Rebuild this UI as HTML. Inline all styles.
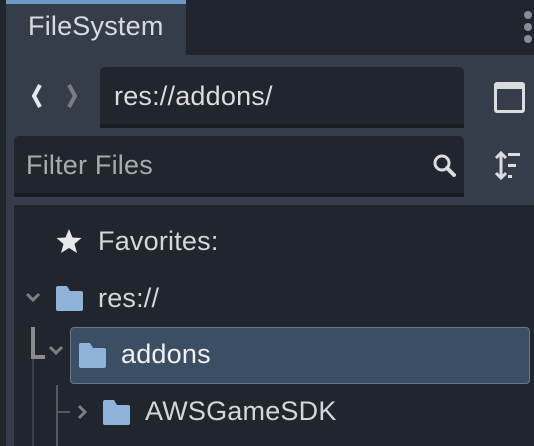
<!DOCTYPE html>
<html><head><style>
*{margin:0;padding:0;box-sizing:border-box}
body{width:534px;height:446px;background:#21252d;position:relative;overflow:hidden;font-family:"Liberation Sans","DejaVu Sans",sans-serif;color:#dcdcdc}
.a{position:absolute}
.t{font-size:27px;white-space:nowrap;letter-spacing:0.2px}
</style></head><body>
<div class="a" style="left:6px;top:0;width:528px;height:446px;background:#363d4a"></div>
<div class="a" style="left:186px;top:0;width:348px;height:55px;background:#21262e"></div>
<div class="a" style="left:6px;top:0;width:180px;height:4px;background:#6b97c6"></div>
<div class="a t" style="left:28px;top:11px;color:#d8dade">FileSystem</div>
<div class="a" style="left:524px;top:11px;width:8px;height:8px;border-radius:4px;background:#8a8d93"></div>
<div class="a" style="left:524px;top:23px;width:8px;height:8px;border-radius:4px;background:#8a8d93"></div>
<div class="a" style="left:524px;top:35px;width:8px;height:8px;border-radius:4px;background:#8a8d93"></div>
<svg class="a" style="left:24px;top:82px" width="60" height="30"><path d="M16 3 L10 14 L16 25" stroke="#e8e8e8" stroke-width="4" fill="none"/><path d="M45 3 L51 14 L45 25" stroke="#7a7d82" stroke-width="4" fill="none"/></svg>
<div class="a" style="left:100px;top:67px;width:364px;height:61px;background:#21252e;border-radius:5px 5px 0 0;border-bottom:4px solid #1a1d23"></div>
<div class="a t" style="left:114px;top:81px;color:#dadbdd">res://addons/</div>
<div class="a" style="left:494px;top:82px;width:31px;height:31px;border:3px solid #dcdcdc;border-top-width:7px;border-radius:3px"></div>
<div class="a" style="left:14px;top:136px;width:450px;height:61px;background:#21252e;border-radius:5px 5px 0 0;border-bottom:4px solid #1a1d23"></div>
<div class="a t" style="left:26px;top:150px;color:#a8aaae">Filter Files</div>
<svg class="a" style="left:420px;top:150px" width="40" height="32"><circle cx="22" cy="13" r="7" stroke="#dcdcdc" stroke-width="3" fill="none"/><path d="M27 18 L34 25" stroke="#dcdcdc" stroke-width="4" stroke-linecap="round"/></svg>
<svg class="a" style="left:492px;top:150px" width="34" height="32"><path d="M9 3 V28 M4 8 L9 3 L14 8 M4 23 L9 28 L14 23" stroke="#dcdcdc" stroke-width="3" fill="none"/><rect x="16" y="3" width="12" height="3" fill="#dcdcdc"/><rect x="16" y="14" width="8" height="3" fill="#dcdcdc"/><rect x="16" y="25" width="4" height="3" fill="#dcdcdc"/></svg>
<div class="a" style="left:14px;top:205px;width:520px;height:241px;background:#21252d"></div>
<svg class="a" style="left:54px;top:227px" width="30" height="30"><path d="M15 2 L18.5 10.5 L27.5 11 L20.5 17 L23 26 L15 21 L7 26 L9.5 17 L2.5 11 L11.5 10.5 Z" fill="#e8e8e8"/></svg>
<div class="a t" style="left:98px;top:226px;color:#d4d6da">Favorites:</div>
<svg class="a" style="left:24px;top:289px" width="20" height="16"><path d="M3 5 L9 11 L15 5" stroke="#7c7f84" stroke-width="3" fill="none"/></svg>
<svg class="a" style="left:55px;top:286px" width="30" height="26"><path d="M1 2 Q1 0 3 0 H12 L15 5 H26 Q28 5 28 7 V23 Q28 25 26 25 H3 Q1 25 1 23 Z" fill="#8fb3d9"/></svg>
<div class="a t" style="left:98px;top:283px;color:#d4d6da">res://</div>
<svg class="a" style="left:28px;top:325px" width="50" height="121"><path d="M5 2 V32 H17" stroke="#8a8b8d" stroke-width="4" fill="none"/><path d="M5 34 V121" stroke="#3b3f47" stroke-width="2" fill="none"/><path d="M22 22 L28 28 L34 22" stroke="#7c7f84" stroke-width="3" fill="none"/></svg>
<div class="a" style="left:70px;top:327px;width:460px;height:57px;background:#3c4e64;border:1px solid #6b7686;border-radius:4px"></div>
<svg class="a" style="left:78px;top:343px" width="30" height="26"><path d="M1 2 Q1 0 3 0 H12 L15 5 H26 Q28 5 28 7 V23 Q28 25 26 25 H3 Q1 25 1 23 Z" fill="#8fb3d9"/></svg>
<div class="a t" style="left:121px;top:339px;color:#f0f0f0">addons</div>
<svg class="a" style="left:54px;top:385px" width="40" height="61"><path d="M3 0 V61 M3 27 H16" stroke="#555960" stroke-width="2" fill="none"/><path d="M25 21 L31 27 L25 33" stroke="#7c7f84" stroke-width="3" fill="none"/></svg>
<svg class="a" style="left:102px;top:400px" width="30" height="26"><path d="M1 2 Q1 0 3 0 H12 L15 5 H26 Q28 5 28 7 V23 Q28 25 26 25 H3 Q1 25 1 23 Z" fill="#8fb3d9"/></svg>
<div class="a t" style="left:145px;top:396px;color:#d4d6da">AWSGameSDK</div>
</body></html>
